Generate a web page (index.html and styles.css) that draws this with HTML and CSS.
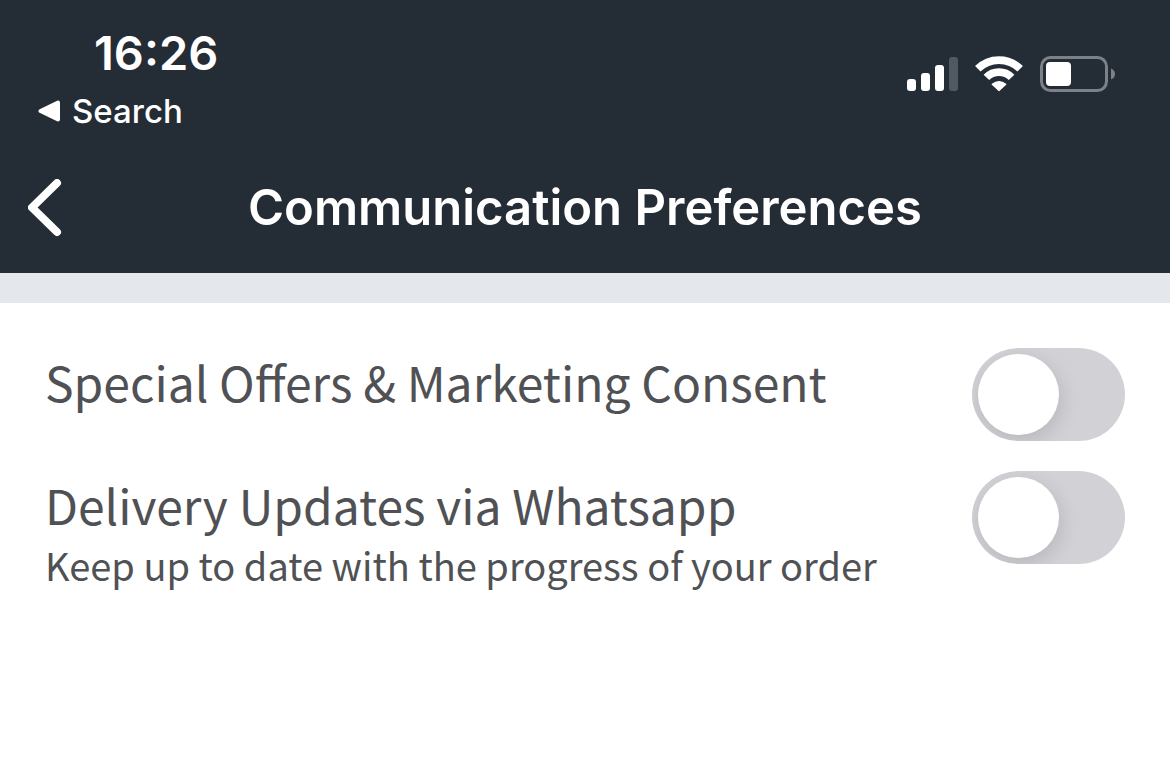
FILE: index.html
```
<!DOCTYPE html>
<html lang="en">
<head>
    <meta charset="UTF-8">
    <meta name="viewport" content="width=device-width, initial-scale=1.0">
    <title>Communication Preferences</title>
    <link rel="stylesheet" href="styles.css">
</head>
<body>
    <header class="header">
        <!-- Status bar -->
        <div class="status-bar">
            <div class="status-left">
                <div class="time">16:26</div>
                <a class="back-to-app" href="#">
                    <svg width="22" height="22" viewBox="0 0 22 22" aria-hidden="true">
                        <path d="M2.500 11L20 2.500V19.500Z" fill="#fff" stroke="#fff" stroke-width="4" stroke-linejoin="round"/>
                    </svg>
                    Search
                </a>
            </div>
            <div class="status-icons">
                <svg width="51" height="36" viewBox="0 0 51 36" fill="#fff" role="img" aria-label="Signal">
                    <rect x="0" y="23" width="9" height="12" rx="3"/>
                    <rect x="14" y="17" width="9" height="18" rx="3"/>
                    <rect x="28" y="9" width="9" height="26" rx="3"/>
                    <rect x="42" y="1" width="9" height="34" rx="3" fill="#515861"/>
                </svg>
                <svg width="48" height="36" viewBox="0 0 48 36" role="img" aria-label="Wi-Fi">
                    <path d="M2.800 12.800A30.200 30.200 0 0 1 45.200 12.800" fill="none" stroke="#fff" stroke-width="7.800"/>
                    <path d="M11.400 21.400A17.600 17.600 0 0 1 36.600 21.400" fill="none" stroke="#fff" stroke-width="7.800"/>
                    <path d="M24 34.600L17.200 28.200Q24 22.800 30.800 28.200Z" fill="#fff" stroke="#fff" stroke-width="1.200" stroke-linejoin="round"/>
                </svg>
                <svg width="75" height="38" viewBox="0 0 75 38" role="img" aria-label="Battery">
                    <rect x="1.500" y="2.500" width="65" height="33" rx="9" fill="none" stroke="#7c8087" stroke-width="3"/>
                    <rect x="6" y="7" width="25" height="24" rx="4" fill="#fff"/>
                    <path d="M71 13.500Q75 15 75 19T71 24.500Z" fill="#7c8087"/>
                </svg>
            </div>
        </div>

        <!-- Navigation -->
        <div class="nav-bar">
            <button class="back-btn" type="button" aria-label="Back">
                <svg width="34" height="58" viewBox="0 0 34 58" aria-hidden="true">
                    <path d="M29 4L4 28.500L29 53" fill="none" stroke="#fff" stroke-width="8" stroke-linecap="round" stroke-linejoin="round"/>
                </svg>
            </button>
            <h1>Communication Preferences</h1>
        </div>
    </header>

    <!-- Preferences -->
    <main class="preferences">
        <div class="preference">
            <label for="marketing">Special Offers &amp; Marketing Consent</label>
            <input class="toggle" type="checkbox" role="switch" id="marketing">
        </div>
        <div class="preference">
            <div>
                <label for="whatsapp">Delivery Updates via Whatsapp</label>
                <p id="whatsappHint">Keep up to date with the progress of your order</p>
            </div>
            <input class="toggle" type="checkbox" role="switch" id="whatsapp" aria-describedby="whatsappHint">
        </div>
    </main>
</body>
</html>
```
FILE: styles.css
```
body {
    margin: 0;
    font-family: "Noto Sans CJK SC", sans-serif;
    background-color: #fff;
    color: #505154;
}

.header {
    background-color: #242c35;
    color: #fff;
    font-family: Inter, sans-serif;
    border-bottom: 30px solid #e4e8ec;
}

.status-bar {
    display: flex;
    justify-content: space-between;
    align-items: flex-start;
    padding: 24px 55px 0 38px;
}

.time {
    padding-left: 56px;
    font-size: 47px;
    line-height: 58px;
    font-weight: 600;
}

.back-to-app {
    display: flex;
    align-items: center;
    gap: 12px;
    margin-top: 8px;
    font-size: 33px;
    line-height: 42px;
    font-weight: 500;
    color: #fff;
    text-decoration: none;
}

.status-icons {
    display: flex;
    align-items: center;
    gap: 17px;
    padding-top: 31px;
}

.nav-bar {
    display: grid;
    grid-template-columns: 34px 1fr 34px;
    align-items: center;
    padding: 45px 28px 34px;
}

.back-btn {
    display: flex;
    padding: 0;
    border: none;
    background: none;
    cursor: pointer;
}

h1 {
    margin: 0;
    font-size: 49px;
    line-height: 62px;
    font-weight: 600;
    text-align: center;
}

.preferences {
    display: flex;
    flex-direction: column;
    gap: 30px;
    padding: 45px;
}

.preference {
    display: flex;
    justify-content: space-between;
    align-items: flex-start;
    gap: 30px;
}

label {
    display: block;
    font-size: 48px;
    line-height: 66px;
}

p {
    margin: 0;
    font-size: 38px;
    line-height: 56px;
}

.toggle {
    appearance: none;
    flex: none;
    width: 153px;
    height: 93px;
    margin: 0;
    padding: 6px;
    box-sizing: border-box;
    border-radius: 47px;
    background-color: #d2d1d6;
    overflow: hidden;
    cursor: pointer;
}

.toggle::before {
    content: "";
    display: block;
    width: 81px;
    height: 81px;
    border-radius: 50%;
    background-color: #fff;
    box-shadow: 2px 6px 20px rgba(0, 0, 0, 0.13);
}

.toggle:checked {
    background-color: #34c759;
}

.toggle:checked::before {
    margin-left: 60px;
}
```
